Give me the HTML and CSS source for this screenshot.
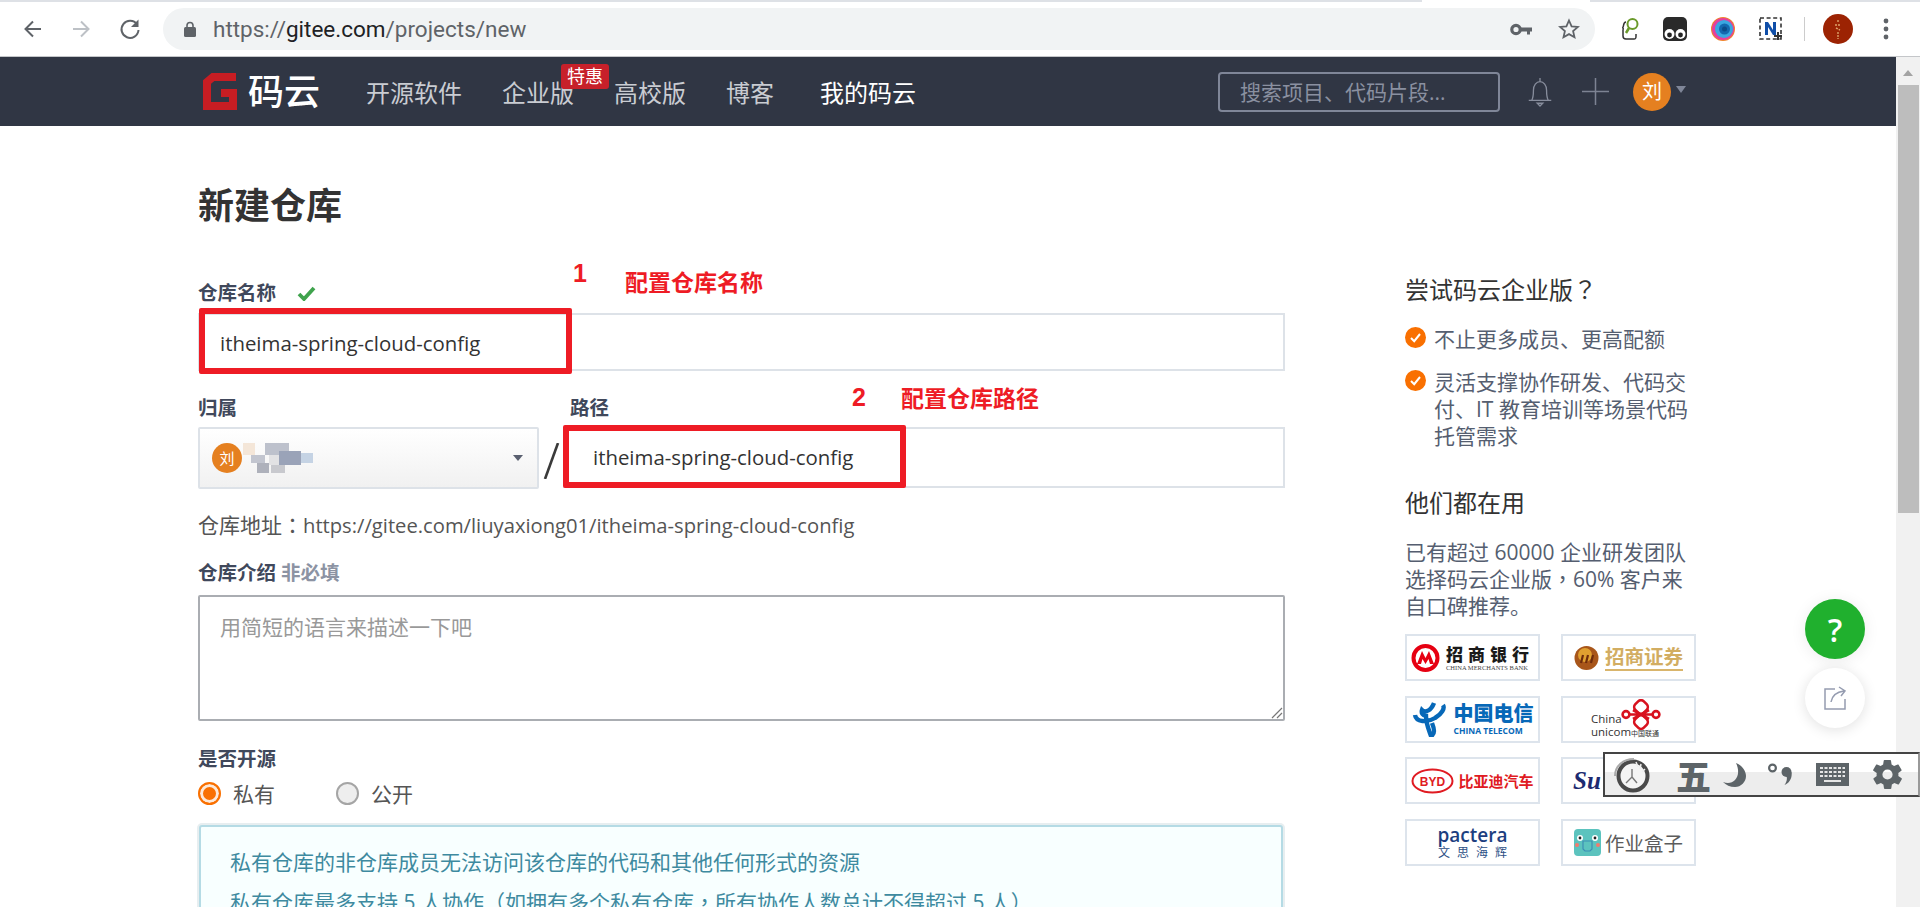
FILE: index.html
```html
<!DOCTYPE html>
<html lang="zh-CN">
<head>
  <meta charset="UTF-8" />
  <title>新建仓库 - 码云</title>
  <link rel="stylesheet" href="styles.css">
</head>
<body>
  <div class="tabstrip"><div class="tab-gap"></div></div>
  <div class="toolbar">
    <svg class="tool-icon" width="20" height="20" viewBox="0 0 20 20"><path d="M18 10H3M10 2.5 2.5 10l7.5 7.5" fill="none" stroke="#5f6368" stroke-width="2"/></svg>
    <svg class="tool-icon" width="20" height="20" viewBox="0 0 20 20"><path d="M2 10h15M10 2.5l7.5 7.5-7.5 7.5" fill="none" stroke="#bdc1c6" stroke-width="2"/></svg>
    <svg class="tool-icon" width="22" height="22" viewBox="0 0 22 22"><path d="M18 6.500A8.500 8.500 0 1 0 19.500 12" fill="none" stroke="#5f6368" stroke-width="2"/><path d="M19.500 1.500v7.500H12z" fill="#5f6368"/></svg>
    <div class="omnibox">
      <svg width="12" height="16" viewBox="0 0 12 16"><path d="M3 7V4.500a3 3 0 0 1 6 0V7" fill="none" stroke="#5f6368" stroke-width="1.600"/><rect y="6" width="12" height="10" rx="1.500" fill="#5f6368"/></svg>
      <div class="url"><span class="url-dim">https://</span>gitee.com<span class="url-dim">/projects/new</span></div>
      <svg class="key" width="22" height="13" viewBox="0 0 22 13"><circle cx="6" cy="6.500" r="4.200" fill="none" stroke="#5f6368" stroke-width="3.200"/><path d="M10 4.500h12v4h-2v3h-3v-3h-7z" fill="#5f6368"/></svg>
      <svg width="22" height="22" viewBox="0 0 22 22"><path d="M11 2.500l2.600 5.800 6.300.6-4.800 4.200 1.400 6.200L11 16.100l-5.500 3.200 1.400-6.200-4.800-4.200 6.300-.6z" fill="none" stroke="#5f6368" stroke-width="1.800"/></svg>
    </div>
    <div class="extensions">
      <svg width="18" height="24" viewBox="0 0 18 24"><path d="M5 5C2 5 3 9 2 10s1 1 0 3v6c0 2 1 3 3 3h8c2 0 2-1 2-3v-2" fill="none" stroke="#333" stroke-width="1.500"/><circle cx="11.500" cy="7" r="5" fill="#fff" stroke="#6a9a2a" stroke-width="2"/><path d="M8 11l-3 5" stroke="#6a9a2a" stroke-width="2.500"/></svg>
      <svg width="24" height="24" viewBox="0 0 24 24"><rect width="24" height="24" rx="5" fill="#2a2a2a"/><circle cx="6.500" cy="17" r="5" fill="#fff"/><circle cx="17.500" cy="17" r="5" fill="#fff"/><circle cx="6.500" cy="18" r="2.400" fill="#222"/><circle cx="17.500" cy="18" r="2.400" fill="#222"/></svg>
      <svg width="24" height="24" viewBox="0 0 24 24"><circle cx="12" cy="12" r="12" fill="#f0842c"/><circle cx="12" cy="12" r="11" fill="#e43f9e"/><circle cx="13" cy="12" r="9" fill="#3aa7e0"/><circle cx="13.500" cy="12" r="5.500" fill="#1468ae"/><circle cx="13.500" cy="12" r="2.500" fill="#0b4d8a"/></svg>
      <svg width="24" height="24" viewBox="0 0 24 24"><rect x="1" y="1" width="21" height="21" fill="none" stroke="#333" stroke-width="1.600" stroke-dasharray="4 2.600"/><path d="M6 18V5h3l5 8V5h3v13h-3L9 10v8z" fill="#0f4ea8"/><path d="M19 15v8M15 19h8" stroke="#333" stroke-width="2"/></svg>
      <div class="ext-sep"></div>
      <svg class="profile" width="30" height="30" viewBox="0 0 30 30"><circle cx="15" cy="15" r="15" fill="#9c2303"/><path d="M15 6v3M12 11h6M13 14l4 2M15 18v7" stroke="#dba26a" stroke-width="1.400" stroke-dasharray="2 1"/></svg>
      <svg class="dots" width="6" height="22" viewBox="0 0 6 22"><circle cx="3" cy="3" r="2.400" fill="#5f6368"/><circle cx="3" cy="11" r="2.400" fill="#5f6368"/><circle cx="3" cy="19" r="2.400" fill="#5f6368"/></svg>
    </div>
  </div>

  <div class="viewport">
    <div class="page">
      <header class="site-header">
        <a class="logo">
          <svg width="36" height="37" viewBox="0 0 36 37"><path d="M33 4H10L4 9v24h26V20H18" fill="none" stroke="#c71d23" stroke-width="8"/></svg>
          <span class="logo-text">码云</span>
        </a>
        <nav class="nav">
          <a>开源软件</a>
          <a class="has-badge">企业版<span class="badge">特惠</span></a>
          <a>高校版</a>
          <a>博客</a>
          <a class="nav-mine">我的码云</a>
        </nav>
        <div class="header-right">
          <div class="search">搜索项目、代码片段...</div>
          <svg class="bell" width="26" height="30" viewBox="0 0 26 32"><path d="M1 25h24M4 25c2-3 2-6 2-11 0-5 3-9 7-9s7 4 7 9c0 5 0 8 2 11M13 1v4M10 28h6l-3 3z" fill="none" stroke="#878d9c" stroke-width="1.400"/></svg>
          <svg class="plus" width="27" height="27" viewBox="0 0 27 27"><path d="M13.500 0v27M0 13.500h27" stroke="#7d8393" stroke-width="1.500"/></svg>
          <span class="avatar avatar-big">刘</span>
          <span class="avatar-caret"></span>
        </div>
      </header>

      <div class="content">
        <main class="form">
          <h1>新建仓库</h1>
          <div class="label label-name">仓库名称
            <svg width="19" height="15" viewBox="0 0 19 15"><path d="M2 8l5 5L17 2" fill="none" stroke="#3fa34d" stroke-width="3.800"/></svg>
          </div>
          <div class="input">itheima-spring-cloud-config</div>
          <div class="owner-row">
            <div class="owner">
              <div class="label">归属</div>
              <div class="select">
                <span class="avatar avatar-small">刘</span>
                <svg class="mosaic" width="76" height="30" viewBox="0 0 76 30"><rect x="0" y="0" width="12" height="12" fill="#f4e6d8"/><rect x="8" y="12" width="14" height="8" fill="#c2c5cf"/><rect x="14" y="20" width="12" height="10" fill="#aeb1bb"/><rect x="22" y="0" width="24" height="12" fill="#bdc1cc"/><rect x="26" y="12" width="10" height="10" fill="#e2e2e4"/><rect x="36" y="8" width="22" height="14" fill="#9aa3b8"/><rect x="58" y="10" width="12" height="10" fill="#c5d3e4"/><rect x="28" y="22" width="14" height="8" fill="#c8c9ce"/></svg>
                <span class="select-caret"></span>
              </div>
            </div>
            <svg class="slash" width="17" height="36" viewBox="0 0 17 36"><path d="M15 0 2 36" stroke="#3a3a3a" stroke-width="2.600"/></svg>
            <div class="path">
              <div class="label">路径</div>
              <div class="input input-path">itheima-spring-cloud-config</div>
            </div>
          </div>
          <div class="repo-url">仓库地址<span class="punct" lang="zh-TW">：</span><span class="repo-link">https://gitee.com/liuyaxiong01/itheima-spring-cloud-config</span></div>
          <div class="label label-intro">仓库介绍 <span class="optional">非必填</span></div>
          <div class="textarea">用简短的语言来描述一下吧
            <svg class="resize" width="14" height="14" viewBox="0 0 14 14"><path d="M13 3 3 13M13 8l-5 5" stroke="#777" stroke-width="1.200"/></svg>
          </div>
          <div class="label label-open">是否开源</div>
          <div class="radios">
            <span class="radio radio-on"></span><span class="radio-text">私有</span>
            <span class="radio"></span><span class="radio-text">公开</span>
          </div>
          <div class="notice">
            <p>私有仓库的非仓库成员无法访问该仓库的代码和其他任何形式的资源</p>
            <p>私有仓库最多支持 5 人协作（如拥有多个私有仓库<span class="punct" lang="zh-TW">，</span>所有协作人数总计不得超过 5 人）</p>
          </div>
        </main>

        <aside class="side">
          <h3>尝试码云企业版<span class="punct" lang="zh-TW">？</span></h3>
          <div class="perk perk-first">
            <svg width="21" height="21" viewBox="0 0 21 21"><circle cx="10.500" cy="10.500" r="10.500" fill="#f97001"/><path d="M6 11l3.200 3.200L15 7" fill="none" stroke="#fff" stroke-width="2"/></svg>
            <span>不止更多成员、更高配额</span>
          </div>
          <div class="perk">
            <svg width="21" height="21" viewBox="0 0 21 21"><circle cx="10.500" cy="10.500" r="10.500" fill="#f97001"/><path d="M6 11l3.200 3.200L15 7" fill="none" stroke="#fff" stroke-width="2"/></svg>
            <span>灵活支撑协作研发、代码交<br>付、IT 教育培训等场景代码<br>托管需求</span>
          </div>
          <h3 class="side-second">他们都在用</h3>
          <p class="side-text">已有超过 60000 企业研发团队<br>选择码云企业版<span class="punct" lang="zh-TW">，</span>60% 客户来<br>自口碑推荐。</p>
          <div class="brands">
            <div class="brand">
              <svg width="29" height="28" viewBox="0 0 29 28"><circle cx="14.500" cy="14" r="12" fill="none" stroke="#e60012" stroke-width="4"/><path d="M6 20 11 7l3.500 7L18 7l5 13h-4l-1.500-5-3 5-3-5L10 20z" fill="#e60012"/></svg>
              <div class="brand-stack"><span class="cmb-name">招商银行</span><span class="cmb-en">CHINA MERCHANTS BANK</span></div>
            </div>
            <div class="brand">
              <svg width="25" height="24" viewBox="0 0 25 24"><circle cx="12.500" cy="12" r="12" fill="#a8561a"/><circle cx="11" cy="9" r="7" fill="#e0a030"/><path d="M7 17l2-8M12 17l2-8M17 17l2-8" stroke="#6e2c0c" stroke-width="2.200"/></svg>
              <span class="cms-name">招商证券</span>
            </div>
            <div class="brand">
              <svg width="36" height="35" viewBox="0 0 36 35"><path d="M3 13c1 7 12 8 20 3 7-4 10-10 8-13M22 1c-3 8-9 10-12 7-1 3 1 6 4 6 0 8 3 14 5 20 5-2 3-8 1-13" fill="none" stroke="#0768b8" stroke-width="4.400"/></svg>
              <div class="brand-stack"><span class="ct-name">中国电信</span><span class="ct-en">CHINA TELECOM</span></div>
            </div>
            <div class="brand brand-unicom">
              <div class="brand-stack"><span class="cu-en">China</span><span class="cu-en">unicom<i>中国联通</i></span></div>
              <svg class="knot" width="40" height="31" viewBox="0 0 40 31"><g fill="none" stroke="#d8121f" stroke-width="2.600"><rect x="14" y="2" width="12" height="12" rx="4" transform="rotate(45 20 8)"/><rect x="14" y="17" width="12" height="12" rx="4" transform="rotate(45 20 23)"/><circle cx="5" cy="15.500" r="3.400"/><circle cx="35" cy="15.500" r="3.400"/><path d="M8 15.500h24M12 11l16 9M28 11l-16 9"/></g></svg>
            </div>
            <div class="brand">
              <svg width="43" height="26" viewBox="0 0 43 26"><ellipse cx="21.500" cy="13" rx="20" ry="11.500" fill="none" stroke="#e01b22" stroke-width="2"/><text class="byd-mark" x="21.500" y="17.500" text-anchor="middle">BYD</text></svg>
              <span class="byd-name">比亚迪汽车</span>
            </div>
            <div class="brand brand-su"><span class="su-name">Su</span></div>
            <div class="brand">
              <div class="brand-stack brand-center"><span class="pac-en">pactera</span><span class="pac-cn">文思海辉</span></div>
            </div>
            <div class="brand brand-zuoye">
              <svg width="27" height="27" viewBox="0 0 27 27"><rect width="27" height="27" rx="4" fill="#5cc3be"/><circle cx="6" cy="9" r="3" fill="#fff"/><circle cx="21" cy="9" r="3" fill="#fff"/><circle cx="6" cy="9" r="1.400" fill="#222"/><circle cx="21" cy="9" r="1.400" fill="#222"/><circle cx="3" cy="16" r="2" fill="#f27a6e"/><circle cx="24" cy="16" r="2" fill="#f27a6e"/><path d="M9 12h9v8l-2 2h-5l-2-2z" fill="none" stroke="#3d8fb5" stroke-width="1.200"/></svg>
              <span class="zuoye-name">作业盒子</span>
            </div>
          </div>
        </aside>
      </div>
    </div>
    <div class="scrollbar">
      <span class="scroll-arrow"></span>
      <div class="scroll-thumb"></div>
    </div>
  </div>

  <!-- annotations drawn over the screenshot -->
  <div class="mark mark-box-1"></div>
  <div class="mark mark-box-2"></div>
  <div class="note-num note-num-1">1</div>
  <div class="note note-1">配置仓库名称</div>
  <div class="note-num note-num-2">2</div>
  <div class="note note-2">配置仓库路径</div>

  <div class="float-btn float-help">?</div>
  <div class="float-btn float-share">
    <svg width="24" height="24" viewBox="0 0 24 24"><path d="M12 3H2v20h20V13" fill="none" stroke="#959cb0" stroke-width="1.500"/><path d="M8 16c1-6 5-10 13-11M16 1l6 4-4 5" fill="none" stroke="#959cb0" stroke-width="1.500"/></svg>
  </div>

  <div class="ime">
    <svg class="ime-logo" width="40" height="36" viewBox="0 0 40 36"><circle cx="21" cy="19" r="14.500" fill="#f4f4f4" stroke="#4a4a4a" stroke-width="4"/><path d="M3 19C3 9 11 2 22 2" fill="none" stroke="#aaa" stroke-width="2"/><path d="M24 5l2 5M29 7l-1 5M33 12l-3 3" stroke="#eee" stroke-width="1.500"/><path d="M20 12v8l-6 6M20 20l5 6" fill="none" stroke="#777" stroke-width="1.400"/></svg>
    <span class="ime-wu">五</span>
    <svg class="ime-moon" width="23" height="24" viewBox="0 0 23 24"><path d="M13 0C19 2 23 8 23 13c0 6-5 11-11 11-5 0-9-2-12-5 5 2 9 1 12-2 4-4 4-11 1-17z" fill="#5d6468"/></svg>
    <svg class="ime-punct" width="24" height="23" viewBox="0 0 24 23"><circle cx="4.500" cy="5" r="3.400" fill="none" stroke="#5d6468" stroke-width="2.200"/><circle cx="18.500" cy="9" r="5" fill="#5d6468"/><path d="M23.500 9c1 6-2 11-7 13 2-3 3-6 2-9z" fill="#5d6468"/></svg>
    <svg class="ime-keys" width="33" height="23" viewBox="0 0 33 23"><rect width="33" height="23" fill="#5d6468"/><path d="M4 5h25M4 9h25M4 13h25" stroke="#e6e6e6" stroke-width="2" stroke-dasharray="3 1.500"/><path d="M8 18h17" stroke="#e6e6e6" stroke-width="2"/></svg>
    <svg class="ime-gear" width="35" height="35" viewBox="0 0 24 24"><path fill="#5d6468" d="M19.400 13c.1-.3.1-.7.1-1s0-.7-.1-1l2.100-1.600c.2-.2.200-.4.100-.6l-2-3.500c-.1-.2-.4-.3-.6-.2l-2.500 1c-.5-.4-1.100-.7-1.700-1l-.4-2.600c0-.2-.2-.4-.5-.4h-4c-.2 0-.5.200-.5.400l-.4 2.600c-.6.300-1.100.6-1.700 1l-2.500-1c-.2-.1-.5 0-.6.200l-2 3.500c-.1.200-.1.500.1.600L4.600 11c0 .3-.1.700-.1 1s0 .7.100 1l-2.100 1.600c-.2.200-.2.400-.1.600l2 3.500c.1.200.4.300.6.200l2.500-1c.5.400 1.100.7 1.700 1l.4 2.600c0 .2.300.4.500.4h4c.3 0 .5-.2.500-.4l.4-2.600c.6-.3 1.200-.6 1.700-1l2.500 1c.2.100.5 0 .6-.2l2-3.500c.1-.2.100-.4-.1-.6zM12 15.500a3.500 3.500 0 1 1 0-7 3.500 3.500 0 0 1 0 7z"/></svg>
  </div>
</body>
</html>
```

FILE: styles.css
```css
body {
  margin: 0;
  height: 907px;
  overflow: hidden;
  position: relative;
  background: #fff;
  font-family: "Open Sans", "Noto Sans CJK SC", sans-serif;
  color: #333;
}
.punct {
  font-family: "Noto Sans CJK TC", sans-serif;
  line-height: 0;
}

/* browser chrome */
.tabstrip {
  height: 2px;
  background: #dee1e6;
  position: relative;
}
.tab-gap {
  position: absolute;
  left: 1422px;
  width: 168px;
  height: 2px;
  background: #fff;
}
.toolbar {
  height: 54px;
  border-bottom: 1px solid #c4c6c9;
  display: flex;
  align-items: center;
  padding-left: 23px;
  background: #fff;
}
.tool-icon {
  margin-right: 28px;
}
.tool-icon:nth-child(3) {
  margin-right: 22px;
}
.omnibox {
  width: 1432px;
  height: 42px;
  border-radius: 21px;
  background: #f1f3f4;
  display: flex;
  align-items: center;
  padding: 0 15px 0 21px;
  box-sizing: border-box;
}
.url {
  flex: 1;
  margin-left: 17px;
  font-family: Roboto, sans-serif;
  font-size: 22.500px;
  color: #202124;
}
.url-dim {
  color: #5f6368;
}
.key {
  margin-right: 26px;
}
.extensions {
  display: flex;
  align-items: center;
  margin-left: 26px;
  gap: 24px;
}
.ext-sep {
  width: 1px;
  height: 24px;
  background: #ccc;
  margin-left: -3px;
}
.profile {
  margin-left: -6px;
}
.dots {
  margin-left: 6px;
}

.viewport {
  display: flex;
  height: 850px;
}
.page {
  width: 1896px;
}

/* site header */
.site-header {
  height: 69px;
  background: #303644;
  display: flex;
  align-items: center;
  padding-left: 203px;
  padding-right: 210px;
}
.logo {
  display: flex;
  align-items: center;
  gap: 9px;
}
.logo-text {
  font-size: 36px;
  line-height: 40px;
  font-weight: 500;
  color: #fff;
}
.nav {
  display: flex;
  gap: 40px;
  margin-left: 46px;
  margin-top: 3px;
  font-size: 24px;
  line-height: 32px;
  color: #c9ccd2;
}
.has-badge {
  position: relative;
}
.badge {
  position: absolute;
  left: 59px;
  top: -13px;
  width: 48px;
  height: 25px;
  border-radius: 3px;
  background: #c7202a;
  color: #fff;
  font-size: 18px;
  line-height: 25px;
  text-align: center;
}
.nav-mine {
  color: #fff;
  margin-left: 6px;
}
.header-right {
  margin-left: auto;
  display: flex;
  align-items: center;
}
.search {
  width: 282px;
  height: 40px;
  box-sizing: border-box;
  border: 2px solid #7f8698;
  border-radius: 4px;
  padding-left: 20px;
  font-size: 21px;
  line-height: 36px;
  color: #8a90a0;
}
.bell {
  margin-left: 27px;
}
.plus {
  margin-left: 29px;
}
.avatar {
  display: inline-block;
  border-radius: 50%;
  background: #e58020;
  color: #fff;
  text-align: center;
}
.avatar-big {
  width: 38px;
  height: 38px;
  margin-left: 24px;
  margin-top: 1px;
  font-size: 20px;
  line-height: 38px;
}
.avatar-caret {
  margin-left: 5px;
  margin-bottom: 4px;
  border: 5.500px solid transparent;
  border-top: 7px solid #7f8698;
  border-bottom: 0;
}

/* form */
.content {
  display: flex;
  padding-left: 198px;
  height: 781px;
  overflow: hidden;
}
.form {
  width: 1087px;
  flex: none;
}
h1 {
  margin: 62px 0 0;
  font-size: 36px;
  line-height: 36px;
  font-weight: 700;
  color: #333;
}
.label {
  font-size: 19.500px;
  line-height: 24px;
  font-weight: 700;
  color: #40485b;
}
.label-name {
  margin-top: 57px;
  display: flex;
  align-items: center;
  gap: 21px;
}
.input {
  height: 58px;
  margin-top: 8px;
  box-sizing: border-box;
  border: 2px solid #dde2e8;
  padding-left: 20px;
  font-size: 20.400px;
  line-height: 57px;
  color: #333;
}
.owner-row {
  margin-top: 25px;
  display: flex;
  align-items: flex-start;
}
.owner {
  width: 341px;
  flex: none;
}
.select {
  height: 62px;
  margin-top: 7px;
  box-sizing: border-box;
  border: 2px solid #dde2e8;
  border-radius: 2px;
  background: linear-gradient(#fff, #f1f1f1);
  display: flex;
  align-items: center;
  padding: 0 14px 0 12px;
}
.avatar-small {
  width: 30px;
  height: 30px;
  font-size: 15px;
  line-height: 30px;
}
.mosaic {
  margin-left: 1px;
}
.select-caret {
  margin-left: auto;
  border: 5.500px solid transparent;
  border-top: 6px solid #5a6070;
  border-bottom: 0;
}
.slash {
  margin: 47px 4px 0 4px;
  flex: none;
}
.path {
  flex: 1;
  margin-left: -1px;
}
.path .label {
  padding-left: 7px;
}
.input-path {
  margin-top: 7px;
  height: 61px;
  padding-left: 28px;
  line-height: 57px;
}
.repo-url {
  margin-top: 24px;
  font-size: 21px;
  line-height: 24px;
  color: #555;
}
.repo-link {
  font-size: 20.200px;
}
.label-intro {
  margin-top: 24px;
}
.optional {
  color: #8c93a3;
}
.textarea {
  position: relative;
  height: 126px;
  margin-top: 10px;
  box-sizing: border-box;
  border: 2px solid #aaadb2;
  border-radius: 2px;
  padding: 17px 20px;
  font-size: 21px;
  line-height: 26px;
  color: #999;
}
.resize {
  position: absolute;
  right: 0;
  bottom: 0;
}
.label-open {
  margin-top: 26px;
}
.radios {
  margin-top: 11px;
  display: flex;
  align-items: center;
  height: 22px;
  font-size: 21px;
}
.radio {
  width: 23px;
  height: 23px;
  box-sizing: border-box;
  border: 2px solid #a5a5a5;
  border-radius: 50%;
  background: #eee;
}
.radio-on {
  border-color: #f97001;
  background: #f97001;
  box-shadow: inset 0 0 0 3px #fde9d8;
}
.radio-text {
  margin-left: 12px;
  margin-right: 61px;
  color: #555;
}
.notice {
  margin-top: 21px;
  margin-left: 1px;
  width: 1084px;
  height: 120px;
  box-sizing: border-box;
  border: 2px solid #b5dbe5;
  border-radius: 3px;
  box-shadow: 0 0 0 2px #e7eef0;
  background: #f8ffff;
  padding: 22px 29px;
  font-size: 21px;
  line-height: 26px;
  color: #3e8aa0;
}
.notice p {
  margin: 0 0 14px;
  white-space: nowrap;
}

/* right column */
.side {
  margin-left: 120px;
  width: 300px;
  flex: none;
}
.side h3 {
  margin: 148px 0 0;
  font-size: 24px;
  line-height: 32px;
  font-weight: 400;
  color: #333;
}
.side .side-second {
  margin-top: 37px;
}
.perk {
  display: flex;
  gap: 8px;
  margin-top: 16px;
  font-size: 21px;
  line-height: 27px;
  color: #555e70;
}
.perk-first {
  margin-top: 20px;
}
.perk svg {
  flex: none;
  margin-top: 1px;
}
.side-text {
  margin: 20px 0 0;
  font-size: 21px;
  line-height: 27px;
  color: #555e70;
}
.brands {
  margin-top: 14px;
  display: grid;
  grid-template-columns: 135px 135px;
  grid-auto-rows: 47px;
  column-gap: 21px;
  row-gap: 14.600px;
}
.brand {
  box-sizing: border-box;
  border: 2px solid #dde4ec;
  display: flex;
  align-items: center;
  justify-content: center;
  gap: 6px;
  overflow: hidden;
  white-space: nowrap;
}
.brand-stack {
  display: flex;
  flex-direction: column;
}
.brand-center {
  align-items: center;
}
.cmb-name {
  font-family: "Noto Sans CJK SC", sans-serif;
  font-size: 17px;
  line-height: 20px;
  font-weight: 900;
  letter-spacing: 5px;
  color: #1a1a1a;
}
.cmb-en {
  font-family: "Liberation Serif", serif;
  font-size: 6.500px;
  line-height: 8px;
  color: #444;
}
.cms-name {
  font-size: 19.500px;
  line-height: 24px;
  font-weight: 700;
  color: #d2ad62;
  border-bottom: 2px solid #d9b56c;
}
.ct-name {
  font-size: 20px;
  line-height: 24px;
  font-weight: 900;
  color: #0768b8;
}
.ct-en {
  font-size: 8.500px;
  line-height: 10px;
  font-weight: 700;
  color: #0768b8;
}
.brand-unicom {
  align-items: flex-end;
  gap: 0;
}
.brand-unicom .brand-stack {
  margin-right: -40px;
  margin-left: -5px;
  padding-bottom: 1px;
}
.knot {
  align-self: flex-start;
  margin-left: 2px;
  margin-top: 1px;
}
.cu-en {
  font-size: 11.500px;
  line-height: 13px;
  color: #333;
}
.cu-en i {
  font-style: normal;
  font-size: 7px;
}
.byd-mark {
  font-family: "Liberation Sans", sans-serif;
  font-size: 12px;
  font-weight: 700;
  fill: #e01b22;
}
.byd-name {
  font-size: 15px;
  font-weight: 700;
  color: #e01b22;
  margin-left: -2px;
}
.brand-su {
  justify-content: flex-start;
  padding-left: 10px;
}
.su-name {
  font-family: "Liberation Serif", serif;
  font-size: 25px;
  font-weight: 700;
  font-style: italic;
  color: #1d2a70;
}
.pac-en {
  font-size: 19px;
  line-height: 20px;
  font-weight: 600;
  color: #1d3f80;
}
.pac-cn {
  font-size: 12px;
  line-height: 15px;
  letter-spacing: 7px;
  margin-right: -7px;
  color: #2d4f85;
}
.brand-zuoye {
  gap: 4px;
}
.zuoye-name {
  font-size: 19.500px;
  color: #5c5c5c;
}

/* scrollbar */
.scrollbar {
  width: 24px;
  background: #f1f1f1;
  padding-top: 13px;
  box-sizing: border-box;
  display: flex;
  flex-direction: column;
  align-items: center;
}
.scroll-arrow {
  border: 5px solid transparent;
  border-bottom: 6px solid #a3a3a3;
  border-top: 0;
}
.scroll-thumb {
  width: 21px;
  height: 428px;
  margin-top: 9px;
  background: #bdbdbd;
}

/* red annotations */
.mark {
  position: absolute;
  box-sizing: border-box;
  border: 6px solid #ee1c25;
  border-radius: 2px;
}
.mark-box-1 {
  left: 199px;
  top: 308px;
  width: 373px;
  height: 66px;
}
.mark-box-2 {
  left: 563px;
  top: 425px;
  width: 343px;
  height: 63px;
}
.note-num {
  position: absolute;
  font-family: "Liberation Sans", sans-serif;
  font-size: 25px;
  line-height: 25px;
  font-weight: 700;
  color: #ee1c25;
}
.note-num-1 {
  left: 573px;
  top: 261px;
}
.note-num-2 {
  left: 852px;
  top: 385px;
}
.note {
  position: absolute;
  font-family: "Noto Sans CJK SC", sans-serif;
  font-size: 23px;
  line-height: 26px;
  font-weight: 700;
  color: #ee1c25;
}
.note-1 {
  left: 625px;
  top: 268px;
}
.note-2 {
  left: 901px;
  top: 384px;
}

/* floating buttons */
.float-btn {
  position: absolute;
  left: 1805px;
  width: 60px;
  height: 60px;
  border-radius: 50%;
  display: flex;
  align-items: center;
  justify-content: center;
}
.float-help {
  top: 599px;
  background: #20b02e;
  color: #fff;
  font-size: 32px;
  font-weight: 600;
  box-shadow: 0 2px 16px rgba(0,0,0,0.08);
}
.float-share {
  top: 668px;
  background: #fff;
  box-shadow: 0 2px 14px rgba(0,0,0,0.12);
}

/* input method bar */
.ime {
  position: absolute;
  left: 1603px;
  top: 752px;
  width: 317px;
  height: 45px;
  box-sizing: border-box;
  border: 2px solid #444;
  border-right-color: #999;
  background: linear-gradient(#fff 45%, #ededed 45%);
  display: flex;
  align-items: center;
  padding-left: 7px;
}
.ime-wu {
  margin-left: 24px;
  font-family: "Noto Sans CJK SC", sans-serif;
  font-size: 35px;
  line-height: 36px;
  font-weight: 900;
  color: #5d6468;
}
.ime-moon {
  margin-left: 12px;
}
.ime-punct {
  margin-left: 22px;
}
.ime-keys {
  margin-left: 24px;
}
.ime-gear {
  margin-left: 21px;
}
```
